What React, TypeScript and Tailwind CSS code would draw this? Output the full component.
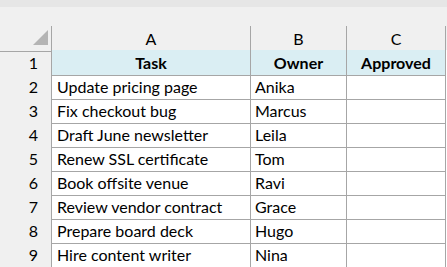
import React from 'react';

const rows = [
  ['Update pricing page', 'Anika'],
  ['Fix checkout bug', 'Marcus'],
  ['Draft June newsletter', 'Leila'],
  ['Renew SSL certificate', 'Tom'],
  ['Book offsite venue', 'Ravi'],
  ['Review vendor contract', 'Grace'],
  ['Prepare board deck', 'Hugo'],
  ['Hire content writer', 'Nina'],
];

const cols = 'grid grid-cols-[52px_199px_96px_99px]';

export default function App() {
  return (
    <div
      className="w-[447px] h-[267px] bg-white overflow-hidden text-[16px] text-black"
      style={{ fontFamily: 'Lato, "Liberation Sans", sans-serif' }}
    >
      {/* top strip */}
      <div className="h-[7px] bg-[#e6e6e6]" />
      <div className="h-[19px] bg-[#f0f0f0]" />

      {/* column letters */}
      <div className={`${cols} h-[24px] bg-[#f0f0f0]`}>
        <div className="relative border-r border-b border-[#a6a6a6]">
          <svg className="absolute left-[33px] top-[4px]" width="15" height="15" viewBox="0 0 15 15">
            <polygon points="15,0 15,15 0,15" fill="#b4b4b4" />
          </svg>
        </div>
        {['A', 'B', 'C'].map((c) => (
          <div key={c} className="flex items-center justify-center border-r border-b border-[#a6a6a6] pt-[1px]">
            {c}
          </div>
        ))}
      </div>

      {/* header row */}
      <div className={`${cols} h-[24px]`}>
        <div className="flex items-center justify-end pr-[13px] pt-[1px] bg-[#f0f0f0] border-r border-b border-[#a6a6a6]">
          1
        </div>
        {['Task', 'Owner', 'Approved'].map((h) => (
          <div key={h} className="flex items-center justify-center font-bold bg-[#daeef3] border-r border-b border-[#a6a6a6] pt-[1px]">
            {h}
          </div>
        ))}
      </div>

      {/* data rows */}
      {rows.map(([task, owner], i) => (
        <div key={task} className={`${cols} h-[24px]`}>
          <div className="flex items-center justify-end pr-[13px] pt-[1px] bg-[#f0f0f0] border-r border-b border-[#a6a6a6]">
            {i + 2}
          </div>
          <div className="flex items-center pl-[5px] pt-[1px] border-r border-b border-[#a6a6a6] whitespace-nowrap">
            {task}
          </div>
          <div className="flex items-center pl-[4px] pt-[1px] border-r border-b border-[#a6a6a6]">
            {owner}
          </div>
          <div className="border-r border-b border-[#a6a6a6]" />
        </div>
      ))}
    </div>
  );
}
